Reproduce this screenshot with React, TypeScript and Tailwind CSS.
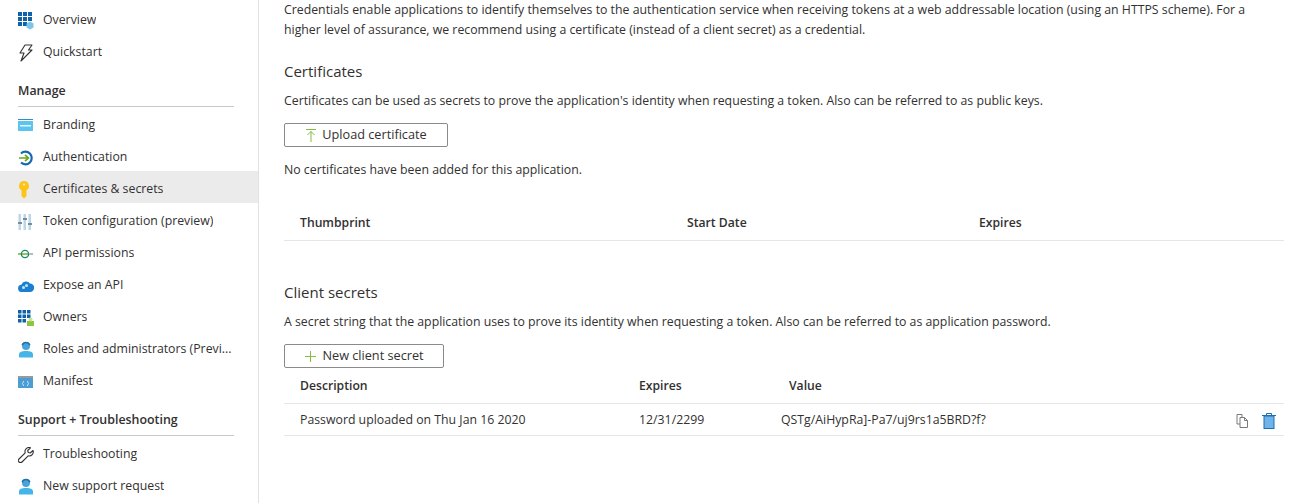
import type { ReactNode } from "react";

function OverviewIcon() {
  return (
    <svg width="18" height="18" viewBox="0 0 18 18">
      <g fill="#0f62a8">
        <rect x="0" y="0" width="4" height="4" />
        <rect x="5" y="0" width="4" height="4" />
        <rect x="10" y="0" width="4" height="4" />
        <rect x="0" y="5" width="4" height="4" />
        <rect x="5" y="5" width="4" height="4" />
        <rect x="10" y="5" width="4" height="4" />
        <rect x="0" y="10" width="4" height="4" />
        <rect x="5" y="10" width="4" height="4" />
      </g>
      <path d="M12 9.5l3.5 2v4l-3.5 2-3.5-2v-4z" fill="#7cc4e8" />
    </svg>
  );
}

function BoltIcon() {
  return (
    <svg width="16" height="18" viewBox="0 0 16 18" fill="none" stroke="#333" strokeWidth="1.1" strokeLinejoin="round">
      <path d="M7 1h7l-3.5 5H14L3 17l3-8H2z" />
    </svg>
  );
}

function BrandingIcon() {
  return (
    <svg width="16" height="14" viewBox="0 0 16 14">
      <rect x="0" y="0" width="15" height="12" fill="#5bc4ef" />
      <rect x="0" y="1" width="15" height="1" fill="#fff" />
      <rect x="2" y="6" width="11" height="1.5" fill="#e8f7fd" />
      <rect x="0" y="0" width="15" height="1" fill="#2f8fc4" />
    </svg>
  );
}

function AuthIcon() {
  return (
    <svg width="16" height="16" viewBox="0 0 16 16" fill="none">
      <path d="M3 3.5A6.3 6.3 0 1 1 3 12.5" stroke="#1368b3" strokeWidth="2.2" />
      <path d="M1 8h9M7 4.8 10.4 8 7 11.2" stroke="#6aa81f" strokeWidth="1.7" />
    </svg>
  );
}

function KeyIcon() {
  return (
    <svg width="12" height="18" viewBox="0 0 12 18">
      <path d="M6 0a5 5 0 0 1 2.5 9.3V15L6 17.5 3.5 15V9.3A5 5 0 0 1 6 0z" fill="#fcc419" />
      <circle cx="6" cy="3.5" r="1" fill="#fff3bf" />
    </svg>
  );
}

function TokenIcon() {
  return (
    <svg width="14" height="16" viewBox="0 0 14 16">
      <g fill="#b9d7e8">
        <rect x="0.5" y="0" width="2.5" height="16" />
        <rect x="5.5" y="0" width="2.5" height="16" />
        <rect x="10.5" y="0" width="2.5" height="16" />
      </g>
      <g fill="#7a8a96">
        <rect x="0" y="8" width="4" height="2" />
        <rect x="5" y="4" width="4" height="2" />
        <rect x="10" y="9" width="4" height="2" />
      </g>
    </svg>
  );
}

function ApiIcon() {
  return (
    <svg width="16" height="10" viewBox="0 0 16 10" fill="none">
      <path d="M0 5h10" stroke="#67a81f" strokeWidth="1.4" />
      <circle cx="7" cy="5" r="3.6" stroke="#1a8a6a" strokeWidth="1.3" />
      <path d="M11.500 5H15" stroke="#8a8a8a" strokeWidth="1.2" />
    </svg>
  );
}

function CloudIcon() {
  return (
    <svg width="16" height="12" viewBox="0 0 16 12">
      <path d="M4 12a3.6 3.6 0 0 1-.6-7.2A4.8 4.8 0 0 1 12 3.6 4.200 4.200 0 0 1 12 12z" fill="#1a7fd0" />
      <circle cx="5.500" cy="7.500" r="1.500" fill="#c6e6f8" />
      <circle cx="8.500" cy="5.500" r="1.500" fill="#c6e6f8" />
    </svg>
  );
}

function OwnersIcon() {
  return (
    <svg width="16" height="16" viewBox="0 0 16 16">
      <g fill="#0f62a8">
        <rect x="0" y="0" width="3.500" height="3.500" />
        <rect x="4.500" y="0" width="3.500" height="3.500" />
        <rect x="9" y="0" width="3.500" height="3.500" />
        <rect x="0" y="4.500" width="3.500" height="3.500" />
        <rect x="4.500" y="4.500" width="3.500" height="3.500" />
        <rect x="9" y="4.500" width="3.500" height="3.500" />
        <rect x="0" y="9" width="3.500" height="3.500" />
        <rect x="4.500" y="9" width="3.500" height="3.500" />
      </g>
      <rect x="9" y="11" width="7" height="5" fill="#8cc63f" />
      <circle cx="12.500" cy="9.500" r="2" fill="#c8e29a" />
    </svg>
  );
}

function PersonIcon() {
  return (
    <svg width="16" height="17" viewBox="0 0 16 17">
      <circle cx="8" cy="5" r="4" fill="#4aa3d8" />
      <path d="M4.200 4.200A4 4 0 0 1 11.800 4.200" fill="none" stroke="#1f6fa8" strokeWidth="1.500" />
      <path d="M1 16.500v-3c0-2.400 2.500-3.500 7-3.500s7 1.100 7 3.500v3z" fill="#45b5e8" />
    </svg>
  );
}

function ManifestIcon() {
  return (
    <svg width="15" height="12" viewBox="0 0 15 12">
      <rect width="15" height="12" fill="#4a9ed4" />
      <rect width="15" height="2" fill="#9a9a9a" />
      <path d="M6 5 5 6v1l-.5.500.5.500v1l1 1M9 5l1 1v1l.5.500-.5.500v1l-1 1" fill="none" stroke="#fff" strokeWidth="0.7" />
    </svg>
  );
}

function WrenchIcon() {
  return (
    <svg width="16" height="16" viewBox="0 0 16 16" fill="none" stroke="#333" strokeWidth="1.1" strokeLinejoin="round">
      <path d="M15 3.500l-2.800 2.500-2-.5-.5-2L12.500.800a4 4 0 0 0-5.300 5L1 12a2 2 0 0 0 3 3l6.200-6.200a4 4 0 0 0 4.800-5.300z" />
    </svg>
  );
}

function NavRow({ icon, label, active }: { icon: ReactNode; label: string; active?: boolean }) {
  return (
    <div className={`flex h-8 items-center pt-[5px] pr-[24px] ${active ? "bg-[#ebebeb]" : ""}`}>
      <div className="flex w-[43px] shrink-0 justify-start pl-[18px]">{icon}</div>
      <span className="truncate">{label}</span>
    </div>
  );
}

function NavHeading({ label }: { label: string }) {
  return (
    <div className="mt-[15px] mr-[24px] ml-[18px] flex h-[26px] items-center border-b border-[#c8c8c8] pb-[5px] text-[12.4px] font-semibold">
      {label}
    </div>
  );
}

function UploadIcon() {
  return (
    <svg width="12" height="15" viewBox="0 0 12 15" fill="none" stroke="#84bd3f" strokeWidth="1">
      <path d="M1 1.500h10M6 14V3.500M2.500 7 6 3.500 9.500 7" />
    </svg>
  );
}

function PlusIcon() {
  return (
    <svg width="13" height="13" viewBox="0 0 13 13" fill="none" stroke="#84bd3f" strokeWidth="1">
      <path d="M6.500 1v11M1 6.500h11" />
    </svg>
  );
}

function CopyIcon() {
  return (
    <svg width="13" height="14" viewBox="0 0 13 14" fill="none" stroke="#7a7a7a" strokeWidth="1">
      <path d="M1 .500h5v9.500H1z" />
      <path d="M4 3.500h4.500l3 3v7H4z" fill="#fff" />
      <path d="M8.500 3.500v3h3" />
    </svg>
  );
}

function TrashIcon() {
  return (
    <svg width="14" height="16" viewBox="0 0 14 16">
      <rect x="2" y="3" width="10" height="12.500" fill="#6fb3e8" stroke="#1a6fb5" strokeWidth="1" />
      <path d="M0 2.500h14M4.500 2.500V.500h5v2" fill="none" stroke="#1a6fb5" strokeWidth="1" />
    </svg>
  );
}

function ActionButton({ icon, label, width }: { icon: ReactNode; label: string; width: string }) {
  return (
    <button className={`flex h-[24px] items-center justify-center gap-[5px] rounded-[2px] border border-[#8a8a8a] bg-white text-[12.7px] ${width}`}>
      {icon}
      <span>{label}</span>
    </button>
  );
}

export default function App() {
  return (
    <div className="flex h-[503px] w-[1311px] overflow-hidden bg-white font-['Open_Sans','Liberation_Sans',sans-serif] text-[12.3px] text-[#323130]">
      <aside className="w-[259px] shrink-0 border-r border-[#e1e1e1] pt-[2px]">
        <NavRow icon={<OverviewIcon />} label="Overview" />
        <NavRow icon={<BoltIcon />} label="Quickstart" />
        <NavHeading label="Manage" />
        <NavRow icon={<BrandingIcon />} label="Branding" />
        <NavRow icon={<AuthIcon />} label="Authentication" />
        <NavRow icon={<KeyIcon />} label="Certificates & secrets" active />
        <NavRow icon={<TokenIcon />} label="Token configuration (preview)" />
        <NavRow icon={<ApiIcon />} label="API permissions" />
        <NavRow icon={<CloudIcon />} label="Expose an API" />
        <NavRow icon={<OwnersIcon />} label="Owners" />
        <NavRow icon={<PersonIcon />} label="Roles and administrators (Previ..." />
        <NavRow icon={<ManifestIcon />} label="Manifest" />
        <NavHeading label="Support + Troubleshooting" />
        <NavRow icon={<WrenchIcon />} label="Troubleshooting" />
        <NavRow icon={<PersonIcon />} label="New support request" />
      </aside>

      <main className="w-[1025px] shrink-0 pl-[25px]">
        <p className="w-[965px] leading-[20px]">
          Credentials enable applications to identify themselves to the authentication service when receiving tokens at a web addressable location (using an HTTPS scheme). For a higher level of assurance, we recommend using a certificate (instead of a client secret) as a credential.
        </p>

        <h2 className="mt-[21px] text-[15px] leading-[20px]">Certificates</h2>
        <p className="mt-[10px] leading-[20px]">
          Certificates can be used as secrets to prove the application's identity when requesting a token. Also can be referred to as public keys.
        </p>
        <div className="mt-[12px]">
          <ActionButton icon={<UploadIcon />} label="Upload certificate" width="w-[164px]" />
        </div>
        <p className="mt-[13px] leading-[20px]">No certificates have been added for this application.</p>

        <div className="mt-[26px] grid h-[35px] grid-cols-[387px_292px_1fr] items-center border-b border-[#e6e6e6] pl-[16px] text-[12.2px] font-semibold">
          <span>Thumbprint</span>
          <span>Start Date</span>
          <span>Expires</span>
        </div>

        <h2 className="mt-[41px] text-[15px] leading-[20px]">Client secrets</h2>
        <p className="mt-[10px] leading-[20px]">
          A secret string that the application uses to prove its identity when requesting a token. Also can be referred to as application password.
        </p>
        <div className="mt-[12px]">
          <ActionButton icon={<PlusIcon />} label="New client secret" width="w-[160px]" />
        </div>

        <div className="grid h-[36px] grid-cols-[339px_150px_1fr] items-center border-b border-[#e6e6e6] pt-[2px] pl-[16px] text-[12.2px] font-semibold">
          <span>Description</span>
          <span>Expires</span>
          <span>Value</span>
        </div>
        <div className="grid h-[32px] grid-cols-[339px_142px_1fr_auto] items-center border-b border-[#e6e6e6] pt-[2px] pl-[16px]">
          <span>Password uploaded on Thu Jan 16 2020</span>
          <span>12/31/2299</span>
          <span>QSTg/AiHypRa]-Pa7/uj9rs1a5BRD?f?</span>
          <div className="flex items-center gap-[13px] pr-[8px]">
            <CopyIcon />
            <TrashIcon />
          </div>
        </div>
      </main>
    </div>
  );
}
